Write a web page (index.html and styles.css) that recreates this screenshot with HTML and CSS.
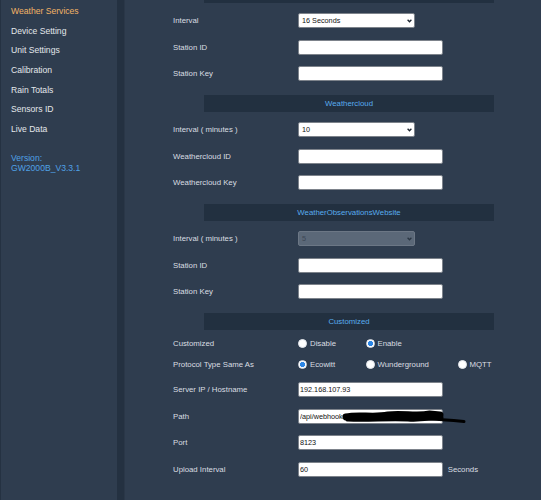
FILE: index.html
```html
<!DOCTYPE html>
<html lang="en">
<head>
    <meta charset="UTF-8">
    <meta name="viewport" content="width=device-width, initial-scale=1.0">
    <title>Weather Services</title>
    <link rel="stylesheet" href="styles.css">
</head>
<body>
    <div class="sidebar">
        <ul class="menu">
            <li class="active">Weather Services</li>
            <li>Device Setting</li>
            <li>Unit Settings</li>
            <li>Calibration</li>
            <li>Rain Totals</li>
            <li>Sensors ID</li>
            <li>Live Data</li>
        </ul>
        <div class="version">Version:<br>GW2000B_V3.3.1</div>
    </div>

    <div class="main">
        <div class="section-head cut"></div>
        <div class="row">
            <label>Interval</label>
            <span class="select-wrap">
                <select class="field-select">
                    <option>16 Seconds</option>
                </select>
                <svg class="chevron" width="5" height="4" viewBox="0 0 5 4"><path d="M0.6 0.8 L2.5 2.8 L4.4 0.8" stroke="currentColor" stroke-width="1.3" fill="none"/></svg>
            </span>
        </div>
        <div class="row">
            <label>Station ID</label>
            <input class="field" type="text">
        </div>
        <div class="row">
            <label>Station Key</label>
            <input class="field" type="text">
        </div>

        <div class="section-head">Weathercloud</div>
        <div class="row">
            <label>Interval ( minutes )</label>
            <span class="select-wrap">
                <select class="field-select">
                    <option>10</option>
                </select>
                <svg class="chevron" width="5" height="4" viewBox="0 0 5 4"><path d="M0.6 0.8 L2.5 2.8 L4.4 0.8" stroke="currentColor" stroke-width="1.3" fill="none"/></svg>
            </span>
        </div>
        <div class="row">
            <label>Weathercloud ID</label>
            <input class="field" type="text">
        </div>
        <div class="row">
            <label>Weathercloud Key</label>
            <input class="field" type="text">
        </div>

        <div class="section-head">WeatherObservationsWebsite</div>
        <div class="row">
            <label>Interval ( minutes )</label>
            <span class="select-wrap off">
                <select class="field-select" disabled>
                    <option>5</option>
                </select>
                <svg class="chevron" width="5" height="4" viewBox="0 0 5 4"><path d="M0.6 0.8 L2.5 2.8 L4.4 0.8" stroke="currentColor" stroke-width="1.3" fill="none"/></svg>
            </span>
        </div>
        <div class="row">
            <label>Station ID</label>
            <input class="field" type="text">
        </div>
        <div class="row">
            <label>Station Key</label>
            <input class="field" type="text">
        </div>

        <div class="section-head">Customized</div>
        <div class="row radio-row first">
            <label>Customized</label>
            <div class="radio-group">
                <span class="option"><input type="radio" name="custom"> Disable</span>
                <span class="option"><input type="radio" name="custom" checked> Enable</span>
            </div>
        </div>
        <div class="row radio-row">
            <label>Protocol Type Same As</label>
            <div class="radio-group">
                <span class="option"><input type="radio" name="proto" checked> Ecowitt</span>
                <span class="option"><input type="radio" name="proto"> Wunderground</span>
                <span class="option"><input type="radio" name="proto"> MQTT</span>
            </div>
        </div>
        <div class="row">
            <label>Server IP / Hostname</label>
            <input class="field" type="text" value="192.168.107.93">
        </div>
        <div class="row">
            <label>Path</label>
            <div class="masked">
                <input class="field" type="text" value="/api/webhook/">
                <!-- hand-drawn marker over the webhook id -->
                <svg class="scribble" width="170" height="18" viewBox="0 0 170 18">
                    <path d="M48 9 C60 6 75 10 90 7 C105 5 118 9 132 6 L142 7" stroke="#000" stroke-width="7" stroke-linecap="round" fill="none"/>
                    <path d="M50 11 C70 12 90 10 110 11 C125 12 135 9 143 10" stroke="#000" stroke-width="5" stroke-linecap="round" fill="none"/>
                    <path d="M118 10 C135 11 150 12 166 13.5" stroke="#000" stroke-width="3" stroke-linecap="round" fill="none"/>
                </svg>
            </div>
        </div>
        <div class="row">
            <label>Port</label>
            <input class="field" type="text" value="8123">
        </div>
        <div class="row">
            <label>Upload Interval</label>
            <div class="with-unit">
                <input class="field" type="text" value="60">
                <span class="unit">Seconds</span>
            </div>
        </div>
    </div>
</body>
</html>
```

FILE: styles.css
```css
* {
    margin: 0;
    padding: 0;
    box-sizing: border-box;
}

body {
    font-family: 'Liberation Sans', Arial, sans-serif;
    background: #2f3d4f;
    display: flex;
    height: 500px;
    overflow: hidden;
}

.sidebar {
    width: 124px;
    flex-shrink: 0;
    background: #2f3d4f;
    border-left: 1px solid #253242;
    border-right: 7px solid #243141;
    padding-top: 2.2px;
}

.menu {
    list-style: none;
}

.menu li {
    height: 19.6px;
    line-height: 19.6px;
    padding-left: 10px;
    font-size: 8.6px;
    color: #e3e7eb;
}

.menu li.active {
    color: #f3b366;
}

.version {
    margin-top: 14px;
    padding-left: 10px;
    font-size: 8.6px;
    line-height: 10px;
    color: #4fa1e6;
}

.main {
    flex: 1;
    border-left: 1px solid #2a3748;
    padding-left: 48px;
}

.section-head {
    width: 290px;
    height: 17px;
    line-height: 17px;
    margin: 8.25px 0 4.25px 31px;
    background: #223040;
    color: #59acee;
    font-size: 7.8px;
    text-align: center;
}

.section-head.cut {
    height: 3px;
    margin-top: 0;
}

.row {
    display: grid;
    grid-template-columns: 125px auto;
    align-items: center;
    height: 26.5px;
}

.row label {
    font-size: 7.8px;
    color: #dadee2;
}

.radio-row.first {
    height: 19px;
}

.radio-row {
    height: 23px;
}

.field {
    display: block;
    width: 145px;
    height: 15px;
    border: 1px solid #7d838b;
    border-radius: 2px;
    background: #fff;
    padding: 0 1px;
    font-family: 'Liberation Sans', Arial, sans-serif;
    font-size: 7.25px;
    color: #111;
    outline: none;
}

.select-wrap {
    position: relative;
    display: block;
    width: 117px;
    height: 15px;
    color: #1c2530;
}

.field-select {
    appearance: none;
    display: block;
    width: 117px;
    height: 15px;
    border: 1px solid #7d838b;
    border-radius: 2px;
    background: #fff;
    padding: 0 0 0 3px;
    font-family: 'Liberation Sans', Arial, sans-serif;
    font-size: 7.25px;
    color: #111;
}

.chevron {
    position: absolute;
    right: 3.5px;
    top: 5.5px;
    pointer-events: none;
}

.select-wrap.off {
    color: #2b3744;
}

.field-select:disabled {
    background: #5b6878;
    border-color: #6c7785;
    color: #3c4755;
    opacity: 1;
}

.radio-group {
    display: grid;
    grid-template-columns: 67.5px 92px auto;
}

.option {
    display: flex;
    align-items: center;
    gap: 3px;
    font-size: 7.8px;
    color: #dadee2;
    white-space: nowrap;
}

.option input {
    appearance: none;
    width: 9px;
    height: 9px;
    margin: 0;
    border-radius: 50%;
    background: #fff;
    border: 1px solid #e6e9ee;
}

.option input:checked {
    background: radial-gradient(circle, #2c86e6 0 2.3px, #fff 2.9px);
}

.masked {
    position: relative;
    width: 145px;
    height: 15px;
}

.scribble {
    position: absolute;
    left: 0;
    top: -1px;
    overflow: visible;
}

.with-unit {
    display: flex;
    align-items: center;
}

.unit {
    margin-left: 4.7px;
    font-size: 7.8px;
    color: #dadee2;
}
```
